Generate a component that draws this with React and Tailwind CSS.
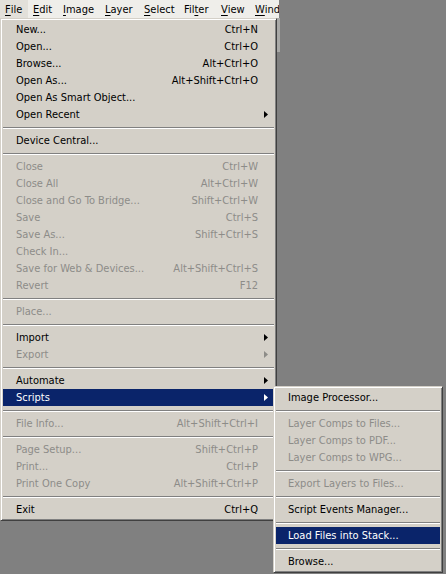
import React from "react";

const Arrow = ({ color }) => (
  <svg width="4" height="7" viewBox="0 0 4 7" className="block">
    <polygon points="0,0 4,3.5 0,7" fill={color} />
  </svg>
);

const Sep = () => (
  <div className="h-[9px] flex items-center">
    <div className="w-full h-[2px] border-t border-t-[#808080] border-b border-b-white" />
  </div>
);

const Row = ({ label, sc, arrow, dis, hi }) => {
  const color = hi ? "text-white" : dis ? "text-[#8d8c88]" : "text-black";
  return (
    <div className={`h-[17px] flex items-center pl-[13px] ${hi ? "bg-[#0a246a]" : ""} ${color}`}>
      <span className="flex-1 whitespace-nowrap">{label}</span>
      {sc && <span className="whitespace-nowrap">{sc}</span>}
      <span className="w-[16px] flex justify-center">
        {arrow && <Arrow color={hi ? "#ffffff" : dis ? "#8d8c88" : "#000000"} />}
      </span>
    </div>
  );
};

const SubRow = ({ label, dis, hi }) => (
  <div
    className={`h-[17px] flex items-center pl-[12px] whitespace-nowrap ${
      hi ? "bg-[#0a246a] text-white" : dis ? "text-[#8d8c88]" : "text-black"
    }`}
  >
    {label}
  </div>
);

const barItems = [
  ["File", "F", "w-[28px] bg-[#e2e0da]"],
  ["Edit", "E", "w-[30px]"],
  ["Image", "I", "w-[42px]"],
  ["Layer", "L", "w-[39px]"],
  ["Select", "S", "w-[40px]"],
  ["Filter", "t", "w-[37px]"],
  ["View", "V", "w-[34px]"],
  ["Window", "W", "w-[40px]"],
];

function BarItem({ text, u, cls }) {
  const idx = text.indexOf(u);
  return (
    <div className={`h-full flex items-center pl-[5px] shrink-0 whitespace-nowrap ${cls}`}>
      {text.slice(0, idx)}
      <span className="underline underline-offset-[2px]">{u}</span>
      {text.slice(idx + 1)}
    </div>
  );
}

export default function App() {
  return (
    <div className="w-[446px] h-[574px] bg-[#808080] relative overflow-hidden text-[11px] leading-none font-['DejaVu_Sans_Condensed','DejaVu_Sans',sans-serif]">
      <div className="h-[18px] w-[279px] bg-[#efeeea] flex overflow-hidden text-black">
        {barItems.map(([t, u, c]) => (
          <BarItem key={t} text={t} u={u} cls={c} />
        ))}
      </div>
      <div className="absolute left-[276px] top-[18px] w-[4px] h-[34px] bg-[#a9a9a7]" />

      {/* Main File menu */}
      <div className="absolute left-0 top-[18px] w-[277px] bg-[#d4d0c8] border border-t-[#d4d0c8] border-l-[#d4d0c8] border-r-[#404040] border-b-[#404040] shadow-[inset_1px_1px_0_#ffffff,inset_-1px_-1px_0_#808080] p-[2px]">
        <Row label="New..." sc="Ctrl+N" />
        <Row label="Open..." sc="Ctrl+O" />
        <Row label="Browse..." sc="Alt+Ctrl+O" />
        <Row label="Open As..." sc="Alt+Shift+Ctrl+O" />
        <Row label="Open As Smart Object..." />
        <Row label="Open Recent" arrow />
        <Sep />
        <Row label="Device Central..." />
        <Sep />
        <Row label="Close" sc="Ctrl+W" dis />
        <Row label="Close All" sc="Alt+Ctrl+W" dis />
        <Row label="Close and Go To Bridge..." sc="Shift+Ctrl+W" dis />
        <Row label="Save" sc="Ctrl+S" dis />
        <Row label="Save As..." sc="Shift+Ctrl+S" dis />
        <Row label="Check In..." dis />
        <Row label="Save for Web & Devices..." sc="Alt+Shift+Ctrl+S" dis />
        <Row label="Revert" sc="F12" dis />
        <Sep />
        <Row label="Place..." dis />
        <Sep />
        <Row label="Import" arrow />
        <Row label="Export" arrow dis />
        <Sep />
        <Row label="Automate" arrow />
        <Row label="Scripts" arrow hi />
        <Sep />
        <Row label="File Info..." sc="Alt+Shift+Ctrl+I" dis />
        <Sep />
        <Row label="Page Setup..." sc="Shift+Ctrl+P" dis />
        <Row label="Print..." sc="Ctrl+P" dis />
        <Row label="Print One Copy" sc="Alt+Shift+Ctrl+P" dis />
        <Sep />
        <Row label="Exit" sc="Ctrl+Q" />
      </div>

      {/* Scripts submenu */}
      <div className="absolute left-[273px] top-[386px] w-[170px] bg-[#d4d0c8] border border-t-[#d4d0c8] border-l-[#d4d0c8] border-r-[#404040] border-b-[#404040] shadow-[inset_1px_1px_0_#ffffff,inset_-1px_-1px_0_#808080] p-[2px]">
        <SubRow label="Image Processor..." />
        <Sep />
        <SubRow label="Layer Comps to Files..." dis />
        <SubRow label="Layer Comps to PDF..." dis />
        <SubRow label="Layer Comps to WPG..." dis />
        <Sep />
        <SubRow label="Export Layers to Files..." dis />
        <Sep />
        <SubRow label="Script Events Manager..." />
        <Sep />
        <SubRow label="Load Files into Stack..." hi />
        <Sep />
        <SubRow label="Browse..." />
      </div>
    </div>
  );
}
